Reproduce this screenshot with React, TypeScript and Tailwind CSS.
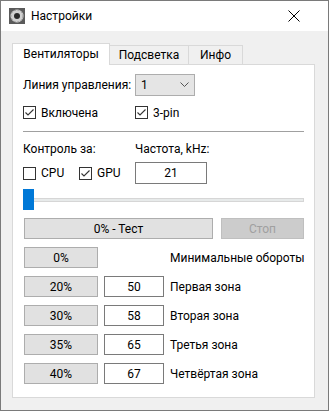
import React from "react";

const Check = ({ checked }: { checked: boolean }) => (
  <div className="w-[13px] h-[13px] border border-[#333333] bg-white flex items-center justify-center shrink-0">
    {checked && (
      <svg width="11" height="11" viewBox="0 0 11 11">
        <path d="M1.5 5.5 L4 8 L9.5 2.5" fill="none" stroke="#333" strokeWidth="1.1" />
      </svg>
    )}
  </div>
);

const Btn = ({ children, w }: { children: React.ReactNode; w: string }) => (
  <div className={`${w} h-[21px] bg-[#e1e1e1] border border-[#adadad] flex items-center justify-center shrink-0`}>
    {children}
  </div>
);

const Inp = ({ children, w, h }: { children: React.ReactNode; w: string; h: string }) => (
  <div className={`${w} ${h} bg-white border border-[#7a7a7a] flex items-center justify-center shrink-0`}>
    {children}
  </div>
);

export default function App() {
  const rows = [
    ["20%", "50", "Первая зона"],
    ["30%", "58", "Вторая зона"],
    ["35%", "65", "Третья зона"],
    ["40%", "67", "Четвёртая зона"],
  ];
  return (
    <div
      className="w-[329px] h-[411px] border border-[#7a7a7a] flex flex-col text-[12px] text-black leading-none whitespace-nowrap"
      style={{ fontFamily: '"Segoe UI", Roboto, sans-serif' }}
    >
      <div className="h-[30px] bg-white flex items-center pl-[8px] shrink-0">
        <svg width="16" height="16" viewBox="0 0 16 16">
          <rect x="0" y="0" width="16" height="16" fill="#5a5a5a" />
          <circle cx="8" cy="8" r="6.5" fill="#d0d0d0" />
          <circle cx="8" cy="8" r="6" fill="none" stroke="#9a9a9a" strokeWidth="1" strokeDasharray="2 1.5" />
          <circle cx="8" cy="8" r="3" fill="#2a2a2a" />
        </svg>
        <span className="ml-[6px]">Настройки</span>
        <div className="ml-auto mr-[28px]">
          <svg width="12" height="12" viewBox="0 0 12 12">
            <path d="M0.5 0.5 L11.5 11.5 M11.5 0.5 L0.5 11.5" stroke="#000" strokeWidth="1" />
          </svg>
        </div>
      </div>
      <div className="flex-1 bg-[#f0f0f0] pl-[11px] pt-[11px]">
        <div className="flex items-end h-[22px]">
          <div className="w-[98px] h-[22px] bg-white border border-[#d9d9d9] border-b-0 flex items-center justify-center relative z-10 -mb-px pb-[1px]">
            Вентиляторы
          </div>
          <div className="w-[79px] h-[19px] bg-[#f0f0f0] border border-[#d9d9d9] border-l-0 border-b-0 flex items-center justify-center">
            Подсветка
          </div>
          <div className="w-[54px] h-[19px] bg-[#f0f0f0] border border-[#d9d9d9] border-l-0 border-b-0 flex items-center justify-center">
            Инфо
          </div>
        </div>
        <div className="w-[303px] h-[334px] bg-white border border-[#d9d9d9] px-[10px] flex flex-col">
          <div className="mt-[9px] h-[22px] flex items-center">
            <span className="w-[112px]">Линия управления:</span>
            <div className="w-[60px] h-[22px] bg-[#e5e5e5] border border-[#adadad] flex items-center px-[5px]">
              <span>1</span>
              <svg className="ml-auto" width="9" height="6" viewBox="0 0 9 6">
                <path d="M0.5 0.5 L4.5 4.5 L8.5 0.5" fill="none" stroke="#555" strokeWidth="1" />
              </svg>
            </div>
          </div>
          <div className="mt-[10px] h-[13px] flex items-center">
            <div className="w-[112px] flex items-center">
              <Check checked />
              <span className="ml-[5px]">Включена</span>
            </div>
            <Check checked />
            <span className="ml-[5px]">3-pin</span>
          </div>
          <div className="mt-[12px] h-px bg-[#a0a0a0] w-[281px]" />
          <div className="mt-[9px] h-[16px] flex items-center">
            <span className="w-[112px]">Контроль за:</span>
            <span>Частота, kHz:</span>
          </div>
          <div className="mt-[5px] h-[22px] flex items-center">
            <Check checked={false} />
            <span className="ml-[5px] w-[38px]">CPU</span>
            <Check checked />
            <span className="ml-[5px] w-[38px]">GPU</span>
            <Inp w="w-[72px]" h="h-[22px]">21</Inp>
          </div>
          <div className="mt-[5px] h-[21px] relative flex items-center">
            <div className="w-[281px] h-[4px] bg-[#e7eaea] border border-[#d6d6d6]" />
            <div className="absolute left-0 top-0 w-[11px] h-[21px] bg-[#0078d7]" />
          </div>
          <div className="mt-[8px] flex pl-[1px]">
            <Btn w="w-[189px]">0% - Тест</Btn>
            <div className="ml-[8px] w-[84px] h-[21px] bg-[#cccccc] border border-[#bfbfbf] flex items-center justify-center text-[#a0a0a0]">
              Стоп
            </div>
          </div>
          <div className="mt-[8px] flex items-center pl-[1px]">
            <Btn w="w-[74px]">0%</Btn>
            <span className="ml-[72px]">Минимальные обороты</span>
          </div>
          {rows.map(([a, b, c]) => (
            <div key={a} className="mt-[8px] flex items-center pl-[1px]">
              <Btn w="w-[74px]">{a}</Btn>
              <div className="ml-[6px]">
                <Inp w="w-[60px]" h="h-[21px]">{b}</Inp>
              </div>
              <span className="ml-[6px]">{c}</span>
            </div>
          ))}
        </div>
      </div>
    </div>
  );
}
